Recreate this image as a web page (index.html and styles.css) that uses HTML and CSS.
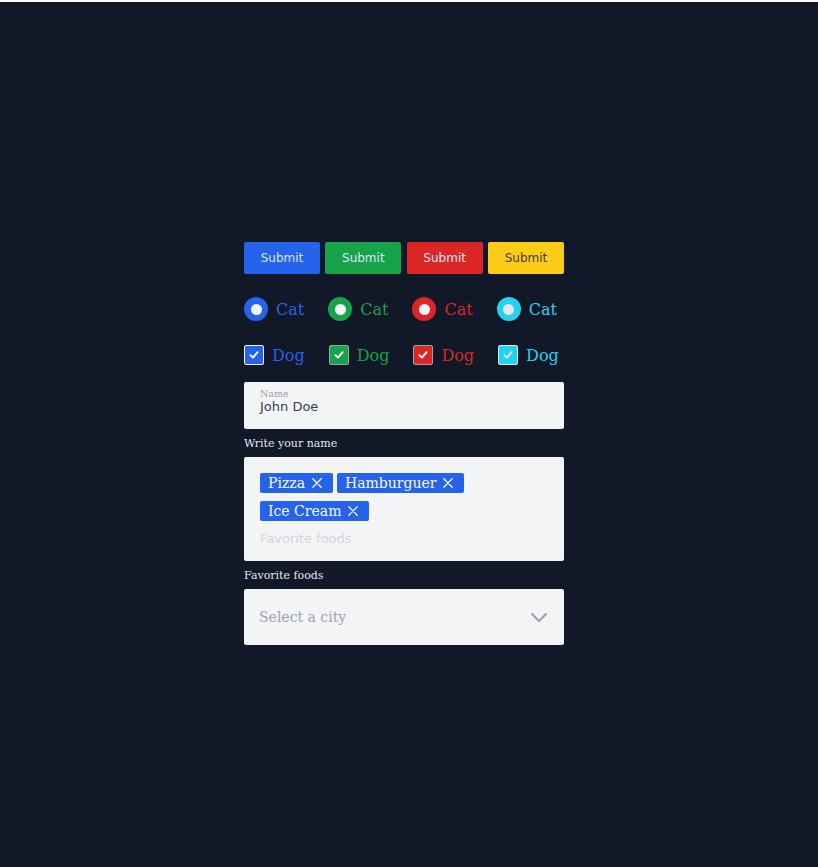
FILE: index.html
```html
<!DOCTYPE html>
<html>
<head>
<meta charset="utf-8">
<link rel="stylesheet" href="styles.css">
</head>
<body>
<main class="page">
  <div class="form">
    <div class="buttons">
      <button class="btn blue">Submit</button>
      <button class="btn green">Submit</button>
      <button class="btn red">Submit</button>
      <button class="btn yellow">Submit</button>
    </div>

    <div class="choices radios">
      <label class="choice c-blue"><span class="radio"><span class="dot"></span></span><span class="txt">Cat</span></label>
      <label class="choice c-green"><span class="radio"><span class="dot"></span></span><span class="txt">Cat</span></label>
      <label class="choice c-red"><span class="radio"><span class="dot"></span></span><span class="txt">Cat</span></label>
      <label class="choice c-cyan"><span class="radio"><span class="dot light"></span></span><span class="txt">Cat</span></label>
    </div>

    <div class="choices checks">
      <label class="choice c-blue"><span class="check b-white"><svg viewBox="0 0 10 10" width="10" height="10"><path d="M1.5 5.2 L4 7.6 L8.6 2.2" fill="none" stroke="#fff" stroke-width="1.9" stroke-linecap="round" stroke-linejoin="round"/></svg></span><span class="txt">Dog</span></label>
      <label class="choice c-green"><span class="check"><svg viewBox="0 0 10 10" width="10" height="10"><path d="M1.5 5.2 L4 7.6 L8.6 2.2" fill="none" stroke="#fff" stroke-width="1.9" stroke-linecap="round" stroke-linejoin="round"/></svg></span><span class="txt">Dog</span></label>
      <label class="choice c-red"><span class="check"><svg viewBox="0 0 10 10" width="10" height="10"><path d="M1.5 5.2 L4 7.6 L8.6 2.2" fill="none" stroke="#fff" stroke-width="1.9" stroke-linecap="round" stroke-linejoin="round"/></svg></span><span class="txt">Dog</span></label>
      <label class="choice c-cyan"><span class="check b-light"><svg viewBox="0 0 10 10" width="10" height="10"><path d="M1.5 5.2 L4 7.6 L8.6 2.2" fill="none" stroke="#e5e7eb" stroke-width="1.9" stroke-linecap="round" stroke-linejoin="round"/></svg></span><span class="txt">Dog</span></label>
    </div>

    <div class="field">
      <div class="field-label">Name</div>
      <div class="field-value">John Doe</div>
    </div>
    <div class="hint">Write your name</div>

    <div class="tagbox">
      <div class="tags">
        <span class="tag">Pizza<svg class="x" viewBox="0 0 10 10" width="10" height="10"><path d="M0.8 0.8 L9.2 9.2 M9.2 0.8 L0.8 9.2" stroke="#f9fafb" stroke-width="1.3" stroke-linecap="round"/></svg></span>
        <span class="tag">Hamburguer<svg class="x" viewBox="0 0 10 10" width="10" height="10"><path d="M0.8 0.8 L9.2 9.2 M9.2 0.8 L0.8 9.2" stroke="#f9fafb" stroke-width="1.3" stroke-linecap="round"/></svg></span>
        <span class="tag">Ice Cream<svg class="x" viewBox="0 0 10 10" width="10" height="10"><path d="M0.8 0.8 L9.2 9.2 M9.2 0.8 L0.8 9.2" stroke="#f9fafb" stroke-width="1.3" stroke-linecap="round"/></svg></span>
      </div>
      <div class="placeholder">Favorite foods</div>
    </div>
    <div class="hint">Favorite foods</div>

    <div class="select">
      <span class="select-text">Select a city</span>
      <svg class="chev" viewBox="0 0 18 12" width="18" height="12"><path d="M2 2 L9 9 L16 2" fill="none" stroke="#9ca3af" stroke-width="2.2" stroke-linecap="round" stroke-linejoin="round"/></svg>
    </div>
  </div>
</main>
</body>
</html>
```

FILE: styles.css
```css
html { background: #ffffff; }
body {
  margin: 0;
  padding-top: 2px;
  font-family: "DejaVu Serif", serif;
}
.page {
  background: #111827;
  min-height: 865px;
  padding-top: 240px;
  box-sizing: border-box;
}
.form {
  width: 320px;
  margin-left: 244px;
}
.buttons {
  display: flex;
  justify-content: space-between;
}
.btn {
  width: 76px;
  height: 32px;
  border: none;
  border-radius: 2px;
  font-family: "DejaVu Sans", sans-serif;
  font-size: 12px;
  padding: 0 0 1px;
  color: #dbe4f5;
}
.btn.blue { background: #2563eb; }
.btn.green { background: #16a34a; }
.btn.red { background: #dc2626; }
.btn.yellow { background: #facc15; color: #3f3f46; }

.choices {
  display: flex;
  gap: 24px;
  align-items: center;
}
.radios { margin-top: 23px; height: 24px; }
.checks { margin-top: 24px; height: 20px; }
.choice {
  display: flex;
  align-items: center;
  gap: 8px;
  font-size: 16px;
  line-height: 20px;
}
.txt { padding-top: 2px; }
.c-blue { color: #2563eb; }
.c-green { color: #16a34a; }
.c-red { color: #dc2626; }
.c-cyan { color: #22d3ee; }
.radio {
  width: 24px;
  height: 24px;
  border-radius: 50%;
  background: currentColor;
  display: flex;
  align-items: center;
  justify-content: center;
}
.dot {
  width: 11px;
  height: 11px;
  border-radius: 50%;
  background: #f3f4f6;
}
.dot.light { background: #e5e7eb; }
.check {
  width: 18px;
  height: 18px;
  border: 1px solid #9ca3af;
  border-radius: 2px;
  background: currentColor;
  display: flex;
  align-items: center;
  justify-content: center;
}
.check.b-white { border-color: #f3f4f6; }
.check.b-light { border-color: #e5e7eb; }

.field {
  margin-top: 17px;
  background: #f3f4f6;
  border-radius: 2px;
  height: 47px;
  box-sizing: border-box;
  padding: 6px 16px 0;
}
.field-label {
  font-size: 9.5px;
  line-height: 11px;
  color: #9ca3af;
}
.field-value {
  font-family: "DejaVu Sans", sans-serif;
  font-size: 13px;
  line-height: 16px;
  color: #374151;
}
.hint {
  font-size: 11px;
  line-height: 14px;
  color: #e5e7eb;
  padding: 8px 0 6px;
}
.tagbox {
  background: #f3f4f6;
  border-radius: 2px;
  padding: 16px 16px 12px;
}
.tags {
  display: flex;
  flex-wrap: wrap;
  column-gap: 4px;
  row-gap: 8px;
}
.tag {
  display: flex;
  align-items: center;
  background: #2563eb;
  color: #f9fafb;
  font-size: 14px;
  line-height: 20px;
  height: 20px;
  padding: 0 11px 0 8px;
  border-radius: 2px;
  white-space: nowrap;
}
.tag .x {
  margin-left: 7px;
}
.placeholder {
  margin-top: 8px;
  font-family: "DejaVu Sans", sans-serif;
  font-size: 13px;
  line-height: 20px;
  color: #d1d5db;
}
.select {
  background: #f3f4f6;
  border-radius: 2px;
  height: 56px;
  display: flex;
  align-items: center;
  justify-content: space-between;
  padding: 0 16px 0 15px;
}
.select-text {
  font-size: 14px;
  color: #9ca3af;
}
.chev { margin-top: 1px; }
```
